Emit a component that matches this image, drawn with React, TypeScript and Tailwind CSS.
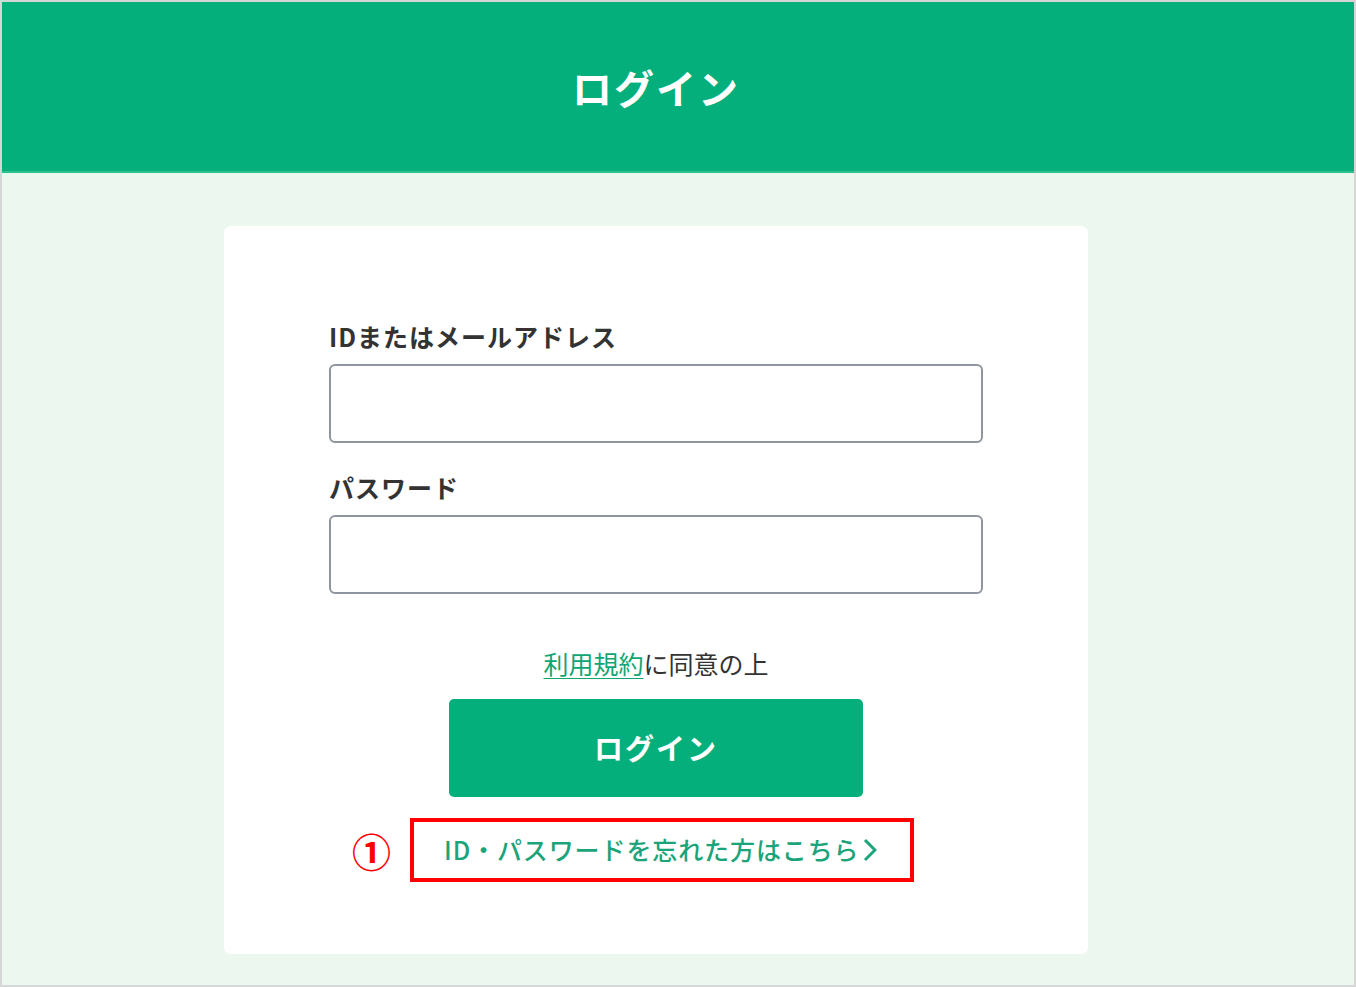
import React from 'react';

const font = { fontFamily: '"Noto Sans CJK JP", "Noto Sans", sans-serif' };

function Field({ label, type }: { label: string; type: string }) {
    return (
        <div className="flex flex-col">
            <label className="text-[25px] font-bold leading-[36px] text-[#333333] tracking-[1px]">{label}</label>
            <input
                type={type}
                className="mt-[10px] h-[79px] w-full rounded-[6px] border-2 border-[#8e959e] bg-white px-4 outline-none"
            />
        </div>
    );
}

export default function App() {
    return (
        <div className="h-[987px] w-[1356px] bg-[#d6d6d6] p-[2px]" style={font}>
            <div className="flex h-full flex-col bg-[#ebf7ef]">
                <header className="flex h-[171px] items-center justify-center border-b-2 border-[#2fc08f] bg-[#04af7b] pr-[44px]">
                    <h1 className="text-[40px] font-bold tracking-[2px] text-white">ログイン</h1>
                </header>

                <div className="flex pt-[53px] pl-[222px]">
                    <div className="w-[864px] rounded-[7px] bg-white px-[105px] pt-[92px] pb-[72px]">
                        <div className="flex flex-col gap-[26px]">
                            <Field label="IDまたはメールアドレス" type="text" />
                            <Field label="パスワード" type="password" />
                        </div>

                        <p className="mt-[51px] text-center text-[25px] leading-[36px] text-[#333333]">
                            <a href="#" className="text-[#0fa673] underline decoration-1 underline-offset-[4px]">利用規約</a>
                            に同意の上
                        </p>

                        <div className="mt-[18px] flex justify-center">
                            <button className="h-[98px] w-[414px] rounded-[5px] bg-[#04af7b] text-[29px] font-bold tracking-[2px] text-white">
                                ログイン
                            </button>
                        </div>

                        <div className="mt-[21px] flex items-center pl-[23px]">
                            <span className="mr-[19px] text-[39px] font-bold leading-none text-[#ff0000]">①</span>
                            <div className="flex h-[64px] w-[504px] items-center border-4 border-[#ff0000] pl-[30px]">
                                <a href="#" className="flex items-center text-[25px] font-medium tracking-[0.9px] text-[#1ba47a]">
                                    ID・パスワードを忘れた方はこちら
                                    <svg width="14" height="24" viewBox="0 0 14 24" className="ml-[3px]">
                                        <path d="M2 2 L12 12 L2 22" fill="none" stroke="#1ba47a" strokeWidth="3" />
                                    </svg>
                                </a>
                            </div>
                        </div>
                    </div>
                </div>
            </div>
        </div>
    );
}
